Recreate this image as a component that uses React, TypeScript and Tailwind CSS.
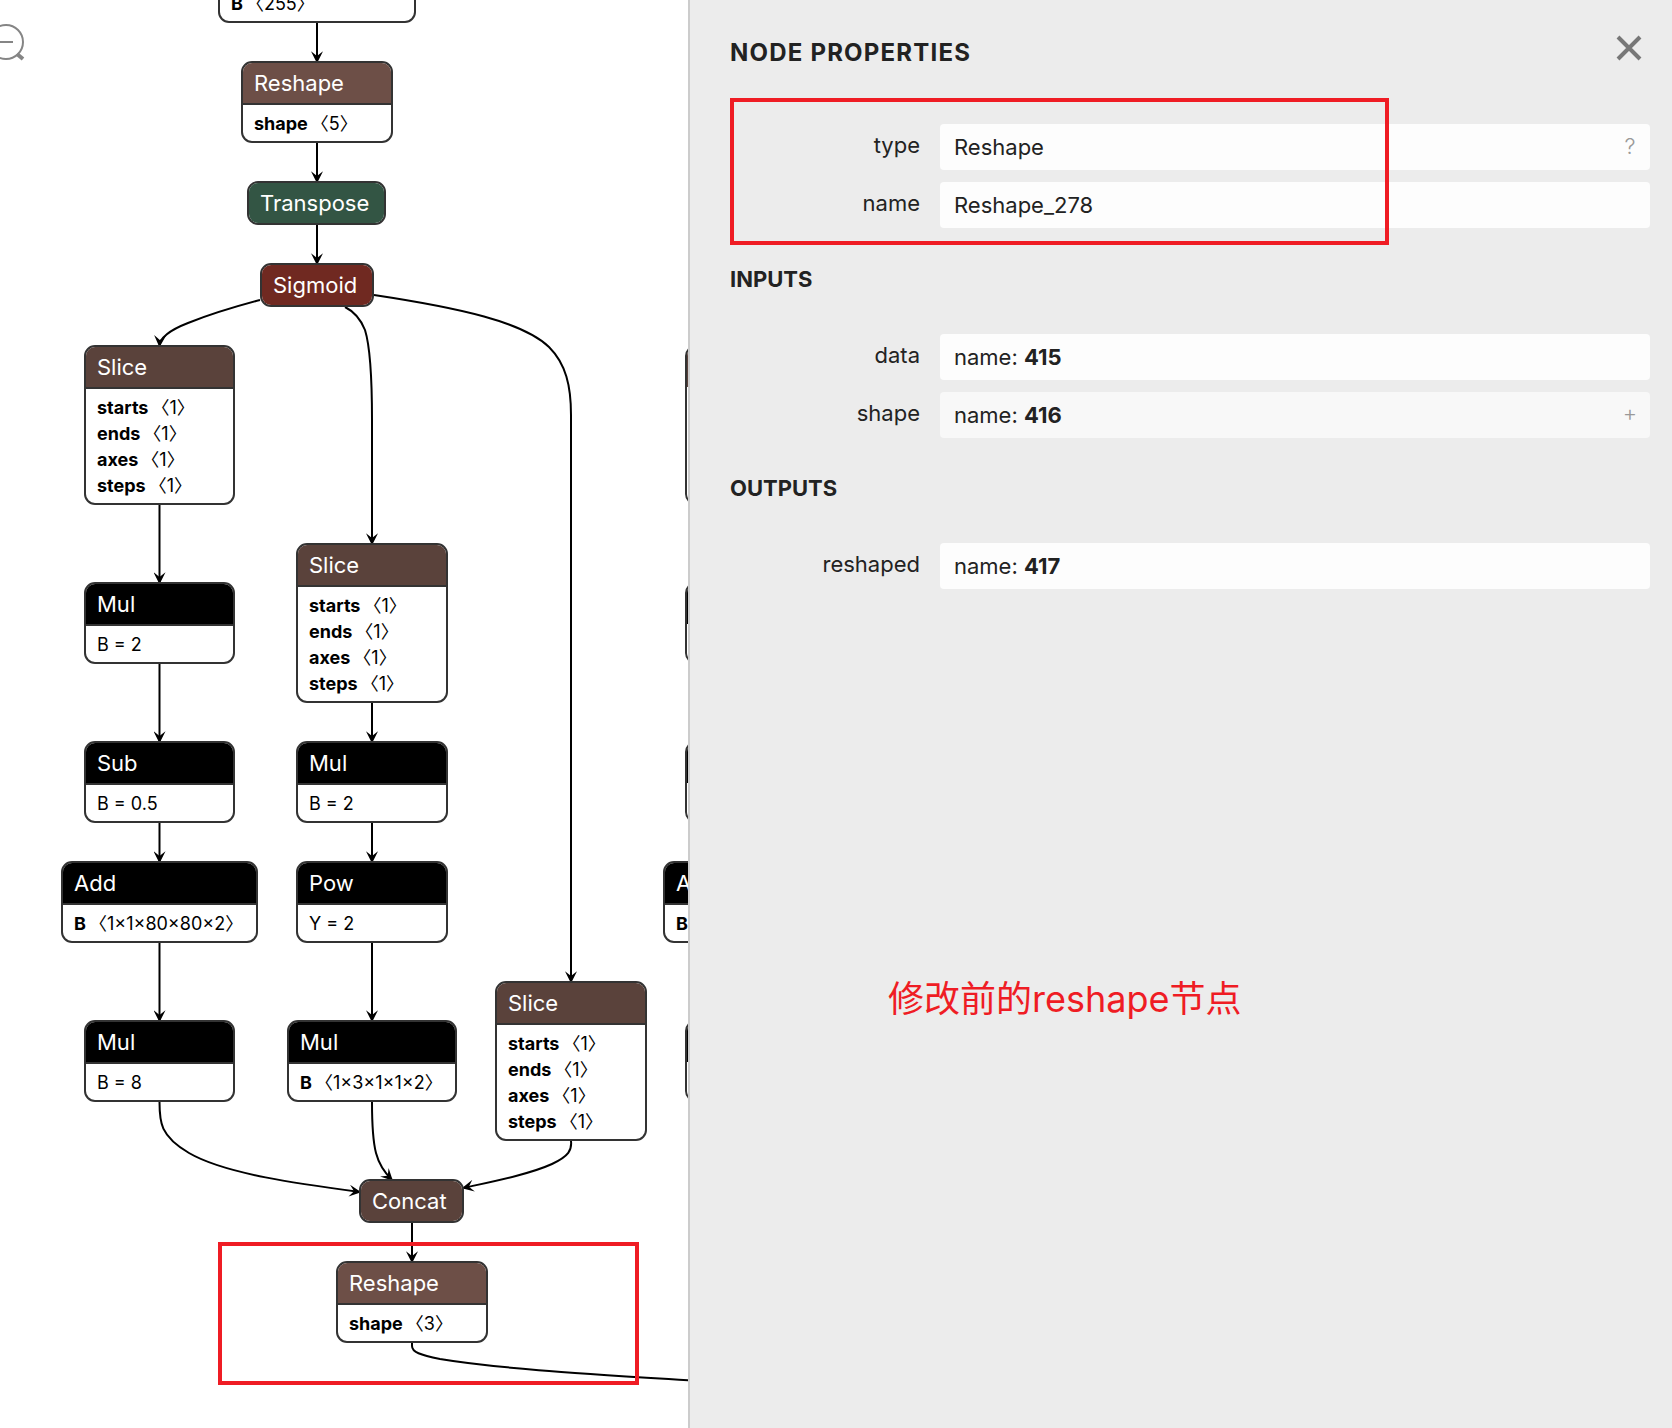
import type { ReactNode } from "react";

type Attr = { name: string; dims?: string; value?: string };
type GraphNode = { title?: string; box: string; tone: string; attrs?: Attr[] };

const BROWN = "bg-[#5a423b]";
const LIGHT_BROWN = "bg-[#6d4f47]";
const BLACK = "bg-black";

const sliceAttrs: Attr[] = [
  { name: "starts", dims: "1" },
  { name: "ends", dims: "1" },
  { name: "axes", dims: "1" },
  { name: "steps", dims: "1" },
];

const nodes: GraphNode[] = [
  { box: "left-[218px] -top-[59px] w-[198px]", tone: BLACK, attrs: [{ name: "B", dims: "255" }] },
  { title: "Reshape", box: "left-[241px] top-[61px] w-[152px]", tone: LIGHT_BROWN, attrs: [{ name: "shape", dims: "5" }] },
  { title: "Transpose", box: "left-[247px] top-[181px] w-[139px]", tone: "bg-[#335544]" },
  { title: "Sigmoid", box: "left-[260px] top-[263px] w-[114px]", tone: "bg-[#702921]" },
  { title: "Slice", box: "left-[84px] top-[345px] w-[151px]", tone: BROWN, attrs: sliceAttrs },
  { title: "Mul", box: "left-[84px] top-[582px] w-[151px]", tone: BLACK, attrs: [{ name: "B", value: "2" }] },
  { title: "Sub", box: "left-[84px] top-[741px] w-[151px]", tone: BLACK, attrs: [{ name: "B", value: "0.5" }] },
  { title: "Add", box: "left-[61px] top-[861px] w-[197px]", tone: BLACK, attrs: [{ name: "B", dims: "1×1×80×80×2" }] },
  { title: "Mul", box: "left-[84px] top-[1020px] w-[151px]", tone: BLACK, attrs: [{ name: "B", value: "8" }] },
  { title: "Slice", box: "left-[296px] top-[543px] w-[152px]", tone: BROWN, attrs: sliceAttrs },
  { title: "Mul", box: "left-[296px] top-[741px] w-[152px]", tone: BLACK, attrs: [{ name: "B", value: "2" }] },
  { title: "Pow", box: "left-[296px] top-[861px] w-[152px]", tone: BLACK, attrs: [{ name: "Y", value: "2" }] },
  { title: "Mul", box: "left-[287px] top-[1020px] w-[170px]", tone: BLACK, attrs: [{ name: "B", dims: "1×3×1×1×2" }] },
  { title: "Slice", box: "left-[495px] top-[981px] w-[152px]", tone: BROWN, attrs: sliceAttrs },
  { title: "Concat", box: "left-[359px] top-[1179px] w-[105px]", tone: BROWN },
  { title: "Reshape", box: "left-[336px] top-[1261px] w-[152px]", tone: LIGHT_BROWN, attrs: [{ name: "shape", dims: "3" }] },
  { box: "left-[685px] top-[345px] h-[160px] w-[152px]", tone: BROWN },
  { box: "left-[685px] top-[582px] h-[82px] w-[152px]", tone: BLACK },
  { box: "left-[685px] top-[741px] h-[82px] w-[152px]", tone: BLACK },
  { title: "Add", box: "left-[663px] top-[861px] w-[197px]", tone: BLACK, attrs: [{ name: "B" }] },
  { box: "left-[685px] top-[1020px] h-[82px] w-[152px]", tone: BLACK },
];

const edges = [
  "M317 23V62",
  "M317 143V182",
  "M317 225V264",
  "M260 300C226 309 203 317 188 323C170 330 160 337 159.500 346",
  "M345 307C355 312 361 320 365 330C370 346 372 372 372 420V544",
  "M374 295C460 308 523 322 549 347C566 364 571 386 571 415V982",
  "M159.500 505V583",
  "M159.500 664V742",
  "M159.500 823V862",
  "M159.500 943V1021",
  "M372 703V742",
  "M372 823V862",
  "M372 943V1021",
  "M159.500 1102C159.500 1122 160 1136 189 1153C225 1174 300 1184 360 1192",
  "M372 1102C372 1150 376 1164 392 1180",
  "M571 1141C572 1150 569 1156 552 1164C530 1174 495 1181 463 1188",
  "M412 1223V1262",
];

function NodeBox({ node }: { node: GraphNode }) {
  return (
    <article className={`absolute overflow-hidden rounded-[11px] border-2 border-[#333] bg-white ${node.box}`}>
      <h3 className={`h-10 px-[11px] text-[22px] leading-[41px] whitespace-nowrap text-white ${node.tone}`}>{node.title}</h3>
      {node.attrs && (
        <ul className="border-t-2 border-[#333] px-[11px] pt-1.5 pb-1 text-[18px] leading-[26px] whitespace-nowrap text-black">
          {node.attrs.map((a) => (
            <li key={a.name}>
              {a.value ? (
                <>
                  {a.name} = {a.value}
                </>
              ) : (
                <>
                  <b className="font-bold">{a.name}</b>
                  {a.dims && <span className="ml-[3px]">〈{a.dims}〉</span>}
                </>
              )}
            </li>
          ))}
        </ul>
      )}
    </article>
  );
}

function Graph() {
  return (
    <main className="relative overflow-hidden bg-white">
      <svg className="absolute top-0 left-0" width="860" height="1428" fill="none" stroke="#000" strokeWidth="2" aria-hidden="true">
        <defs>
          <marker id="arrow" viewBox="0 0 10 10" refX="9" refY="5" markerWidth="8" markerHeight="6" orient="auto">
            <path d="M0 0L10 5L0 10L4 5z" fill="#000" stroke="none" />
          </marker>
        </defs>
        {edges.map((d) => (
          <path key={d} d={d} markerEnd="url(#arrow)" />
        ))}
        <path d="M412 1343V1346C412 1352 420 1355 440 1359C500 1369 590 1374 700 1381" />
      </svg>
      {nodes.map((n) => (
        <NodeBox key={n.box} node={n} />
      ))}
      <button type="button" aria-label="Zoom out" className="absolute top-5 -left-4 text-[#858585]">
        <svg width="44" height="44" fill="none" stroke="currentColor" strokeWidth="2">
          <circle cx="22" cy="22" r="17" />
          <path d="M15 22H29" />
          <path d="M33 34L39 39" strokeWidth="4" />
        </svg>
      </button>
      <div className="pointer-events-none absolute top-[1242px] left-[218px] h-[143px] w-[421px] border-4 border-[#ef1c24]" />
    </main>
  );
}

const FIELD = "h-[46px] w-full rounded-[4px] px-3.5 text-[22px] leading-[46px] text-[#222] outline-none";

function Row({ id, label, children, action }: { id: string; label: string; children: ReactNode; action?: ReactNode }) {
  return (
    <div className="grid grid-cols-[190px_1fr] gap-5">
      <label htmlFor={id} className="h-[42px] text-right text-[22px] leading-[43px]">
        {label}
      </label>
      <div className="relative">
        {children}
        {action}
      </div>
    </div>
  );
}

function Tensor({ id, label, value, expandable }: { id: string; label: string; value: string; expandable?: boolean }) {
  return (
    <Row
      id={id}
      label={label}
      action={
        expandable && (
          <button type="button" aria-label="Expand" className="absolute top-0 right-0 h-[42px] w-10 text-[22px] font-light text-[#999]">
            +
          </button>
        )
      }
    >
      <output id={id} className={`block ${FIELD} ${expandable ? "bg-[#f8f8f8]" : "bg-[#fdfdfd]"}`}>
        name: <b className="font-bold">{value}</b>
      </output>
    </Row>
  );
}

function Sidebar() {
  return (
    <aside className="relative border-l-2 border-[#ccc] bg-[#ececec] pr-[22px] pl-10 text-[#222]">
      <header className="flex h-[98px] items-start justify-between pt-[34px]">
        <h1 className="text-[24px] leading-[38px] font-bold tracking-wider">NODE PROPERTIES</h1>
        <button type="button" aria-label="Close" className="mr-[7px] text-[#777]">
          <svg width="28" height="28" fill="none" stroke="currentColor" strokeWidth="4">
            <path d="M3 3L25 25M25 3L3 25" />
          </svg>
        </button>
      </header>
      <section className="relative flex h-[147px] flex-col gap-3 pt-[26px]">
        <Row
          id="type"
          label="type"
          action={
            <button type="button" aria-label="Help" className="absolute top-0 right-0 h-11 w-10 text-[22px] font-light text-[#999]">
              ?
            </button>
          }
        >
          <input id="type" readOnly value="Reshape" className={`block bg-[#fdfdfd] ${FIELD}`} />
        </Row>
        <Row id="name" label="name">
          <input id="name" readOnly value="Reshape_278" className={`block bg-[#fdfdfd] ${FIELD}`} />
        </Row>
        <div className="pointer-events-none absolute top-0 left-0 h-[147px] w-[659px] border-4 border-[#ef1c24]" />
      </section>
      <section className="flex flex-col gap-3 pt-5">
        <h2 className="mb-[29px] text-[22px] leading-7 font-bold">INPUTS</h2>
        <Tensor id="data" label="data" value="415" />
        <Tensor id="shape" label="shape" value="416" expandable />
      </section>
      <section className="flex flex-col gap-3 pt-9">
        <h2 className="mb-[29px] text-[22px] leading-7 font-bold">OUTPUTS</h2>
        <Tensor id="reshaped" label="reshaped" value="417" />
      </section>
      <p className="absolute top-[972px] left-[198px] text-[36px] leading-[54px] whitespace-nowrap text-[#ef1c24]">
        修改前的reshape节点
      </p>
    </aside>
  );
}

export default function App() {
  return (
    <div className="grid min-h-screen grid-cols-[86fr_123fr] font-[Inter,'Noto_Sans_CJK_SC',sans-serif]">
      <Graph />
      <Sidebar />
    </div>
  );
}
